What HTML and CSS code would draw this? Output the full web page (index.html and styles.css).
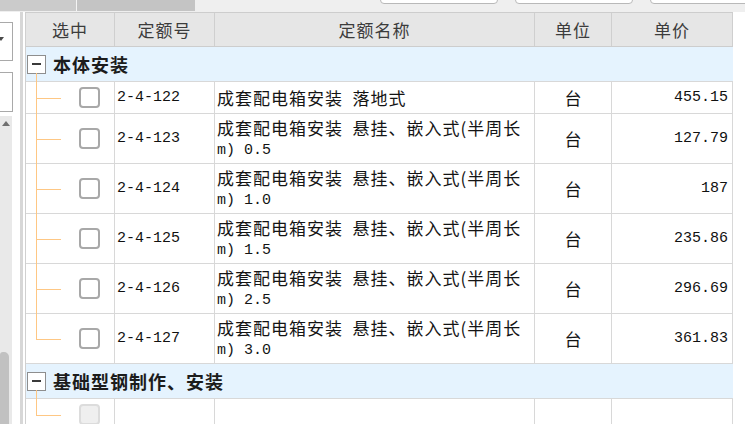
FILE: index.html
```html
<!DOCTYPE html>
<html lang="zh-CN">
<head>
<meta charset="utf-8">
<title>定额列表</title>
<link rel="stylesheet" href="styles.css">
</head>
<body>
<div class="topbar">
  <div class="tab tab-a"></div>
  <div class="tab tab-b"></div>
  <div class="tools">
    <span class="tbox"></span>
    <span class="tbox"></span>
    <span class="tbox"></span>
  </div>
</div>
<div class="main">
  <aside class="side">
    <div class="field f1"><span class="caret"></span></div>
    <div class="field f2"></div>
    <div class="scroll"><span class="arrow-up"></span><span class="thumb"></span></div>
  </aside>
  <div class="sep"></div>
  <div class="grid">
    <div class="row head">
      <div class="cell">选中</div>
      <div class="cell">定额号</div>
      <div class="cell">定额名称</div>
      <div class="cell">单位</div>
      <div class="cell">单价</div>
    </div>

    <div class="group"><span class="toggle"></span><span class="gtitle">本体安装</span></div>

    <div class="row item short">
      <div class="cell sel mid"><span class="check"></span></div>
      <div class="cell code">2-4-122</div>
      <div class="cell name">成套配电箱安装&ensp;落地式</div>
      <div class="cell unit">台</div>
      <div class="cell price">455.15</div>
    </div>
    <div class="row item tall">
      <div class="cell sel mid"><span class="check"></span></div>
      <div class="cell code">2-4-123</div>
      <div class="cell name"><span>成套配电箱安装&ensp;悬挂、嵌入式(半周长<br><span class="lat">m) 0.5</span></span></div>
      <div class="cell unit">台</div>
      <div class="cell price">127.79</div>
    </div>
    <div class="row item tall">
      <div class="cell sel mid"><span class="check"></span></div>
      <div class="cell code">2-4-124</div>
      <div class="cell name"><span>成套配电箱安装&ensp;悬挂、嵌入式(半周长<br><span class="lat">m) 1.0</span></span></div>
      <div class="cell unit">台</div>
      <div class="cell price">187</div>
    </div>
    <div class="row item tall">
      <div class="cell sel mid"><span class="check"></span></div>
      <div class="cell code">2-4-125</div>
      <div class="cell name"><span>成套配电箱安装&ensp;悬挂、嵌入式(半周长<br><span class="lat">m) 1.5</span></span></div>
      <div class="cell unit">台</div>
      <div class="cell price">235.86</div>
    </div>
    <div class="row item tall">
      <div class="cell sel mid"><span class="check"></span></div>
      <div class="cell code">2-4-126</div>
      <div class="cell name"><span>成套配电箱安装&ensp;悬挂、嵌入式(半周长<br><span class="lat">m) 2.5</span></span></div>
      <div class="cell unit">台</div>
      <div class="cell price">296.69</div>
    </div>
    <div class="row item tall">
      <div class="cell sel last"><span class="check"></span></div>
      <div class="cell code">2-4-127</div>
      <div class="cell name"><span>成套配电箱安装&ensp;悬挂、嵌入式(半周长<br><span class="lat">m) 3.0</span></span></div>
      <div class="cell unit">台</div>
      <div class="cell price">361.83</div>
    </div>

    <div class="group"><span class="toggle"></span><span class="gtitle">基础型钢制作、安装</span></div>

    <div class="row item short">
      <div class="cell sel last"><span class="check disabled"></span></div>
      <div class="cell code"></div>
      <div class="cell name"></div>
      <div class="cell unit"></div>
      <div class="cell price"></div>
    </div>
  </div>
</div>
</body>
</html>
```
FILE: styles.css
```css
html, body {
  margin: 0;
  padding: 0;
}
body {
  width: 745px;
  height: 424px;
  overflow: hidden;
  background: #ffffff;
  font-family: "Noto Sans CJK SC", "Noto Sans", sans-serif;
  color: #141414;
}

/* top strip */
.topbar {
  display: flex;
  height: 12px;
  background: #efefef;
  overflow: hidden;
}
.tab {
  height: 11px;
  flex: none;
}
.tab-a {
  width: 76px;
  background: #cbcbcb;
  border-right: 1px solid #f4f4f4;
}
.tab-b {
  width: 118px;
  background: #c4c4c4;
}
.tools {
  display: flex;
  gap: 17px;
  padding-left: 185px;
  flex: 1;
  overflow: hidden;
}
.tbox {
  flex: none;
  width: 116px;
  height: 10px;
  margin-top: -8px;
  border: 1px solid #b9b9b9;
  border-radius: 4px;
  background: #ffffff;
}

/* main area */
.main {
  display: flex;
  height: 412px;
}
.side {
  width: 20px;
  flex: none;
  display: flex;
  flex-direction: column;
  background: #ffffff;
}
.field {
  margin-left: -1px;
  width: 12px;
  border: 1px solid #a9a9a9;
  background: #ffffff;
}
.f1 {
  margin-top: 10px;
  height: 37px;
}
.f2 {
  margin-top: 11px;
  height: 38px;
}
.caret {
  display: block;
  width: 0;
  margin: 14px 0 0 -2px;
  border-left: 3px solid transparent;
  border-right: 3px solid transparent;
  border-top: 4px solid #4a4a4a;
}
.scroll {
  margin-top: 4px;
  width: 12px;
  flex: 1;
  background: #e9e9e9;
  display: flex;
  flex-direction: column;
  justify-content: space-between;
}
.arrow-up {
  width: 0;
  margin: 5px 0 0 2px;
  border-left: 4px solid transparent;
  border-right: 4px solid transparent;
  border-bottom: 5px solid #707070;
}
.thumb {
  width: 9px;
  height: 72px;
  background: #c1c1c1;
  border-radius: 3px 5px 0 0;
}
.sep {
  width: 3px;
  flex: none;
  background: #d7d7d7;
  margin-right: 2px;
}

/* grid */
.grid {
  width: 708px;
  flex: none;
  align-self: flex-start;
  box-sizing: border-box;
  border-top: 1px solid #cdcdcd;
  border-left: 1px solid #d0d0d0;
}
.row {
  display: grid;
  grid-template-columns: 89px 100px 320px 77px 121px;
  box-sizing: border-box;
  border-bottom: 1px solid #d8d8d8;
}
.cell {
  box-sizing: border-box;
  border-right: 1px solid #d8d8d8;
  display: flex;
  align-items: center;
  min-width: 0;
}
.head {
  height: 34px;
  background: #e6e6e6;
  border-bottom-color: #cdcdcd;
}
.head .cell {
  justify-content: center;
  font-size: 17px;
  letter-spacing: 1px;
  color: #3c3c3c;
  border-right-color: #cfcfcf;
}
.short { height: 32px; }
.tall { height: 50px; }

/* group rows */
.group {
  position: relative;
  height: 35px;
  box-sizing: border-box;
  display: flex;
  align-items: center;
  background: #e5f3fe;
  border-bottom: 1px solid #d8d8d8;
}
.group::after {
  content: "";
  position: absolute;
  left: 10px;
  top: 26px;
  bottom: -1px;
  width: 1px;
  background: #fec784;
}
.toggle {
  margin-left: 1px;
  width: 19px;
  height: 19px;
  box-sizing: border-box;
  border: 1px solid #8e8e8e;
  background: #ffffff;
  display: flex;
  align-items: center;
  justify-content: center;
}
.toggle::before {
  content: "";
  width: 9px;
  height: 2px;
  background: #3a3a3a;
}
.gtitle {
  margin-left: 7px;
  font-size: 18px;
  font-weight: bold;
  letter-spacing: 1px;
  color: #1c1c1c;
}

/* item cells */
.sel {
  position: relative;
  padding-left: 53px;
}
.sel::before {
  content: "";
  position: absolute;
  left: 10px;
  top: -1px;
  bottom: -1px;
  width: 1px;
  background: #fec784;
}
.sel.last::before {
  bottom: 50%;
}
.sel::after {
  content: "";
  position: absolute;
  left: 10px;
  top: 50%;
  width: 25px;
  height: 1px;
  background: #fec784;
}
.check {
  width: 21px;
  height: 21px;
  box-sizing: border-box;
  border: 2px solid #a8a8a8;
  border-radius: 4px;
  background: #ffffff;
}
.check.disabled {
  background: #efefef;
  border-color: #dcdcdc;
}
.code {
  padding-left: 2px;
  font-family: "Liberation Mono", monospace;
  font-size: 15px;
  color: #111111;
}
.name {
  padding-left: 2px;
  font-size: 17px;
  letter-spacing: 1px;
  line-height: 19px;
  color: #141414;
}
.lat {
  font-family: "Liberation Mono", monospace;
  font-size: 15px;
  letter-spacing: 0;
}
.unit {
  justify-content: center;
  font-size: 17px;
  color: #141414;
}
.price {
  justify-content: flex-end;
  padding-right: 4px;
  font-family: "Liberation Mono", monospace;
  font-size: 15px;
  color: #111111;
}
```
